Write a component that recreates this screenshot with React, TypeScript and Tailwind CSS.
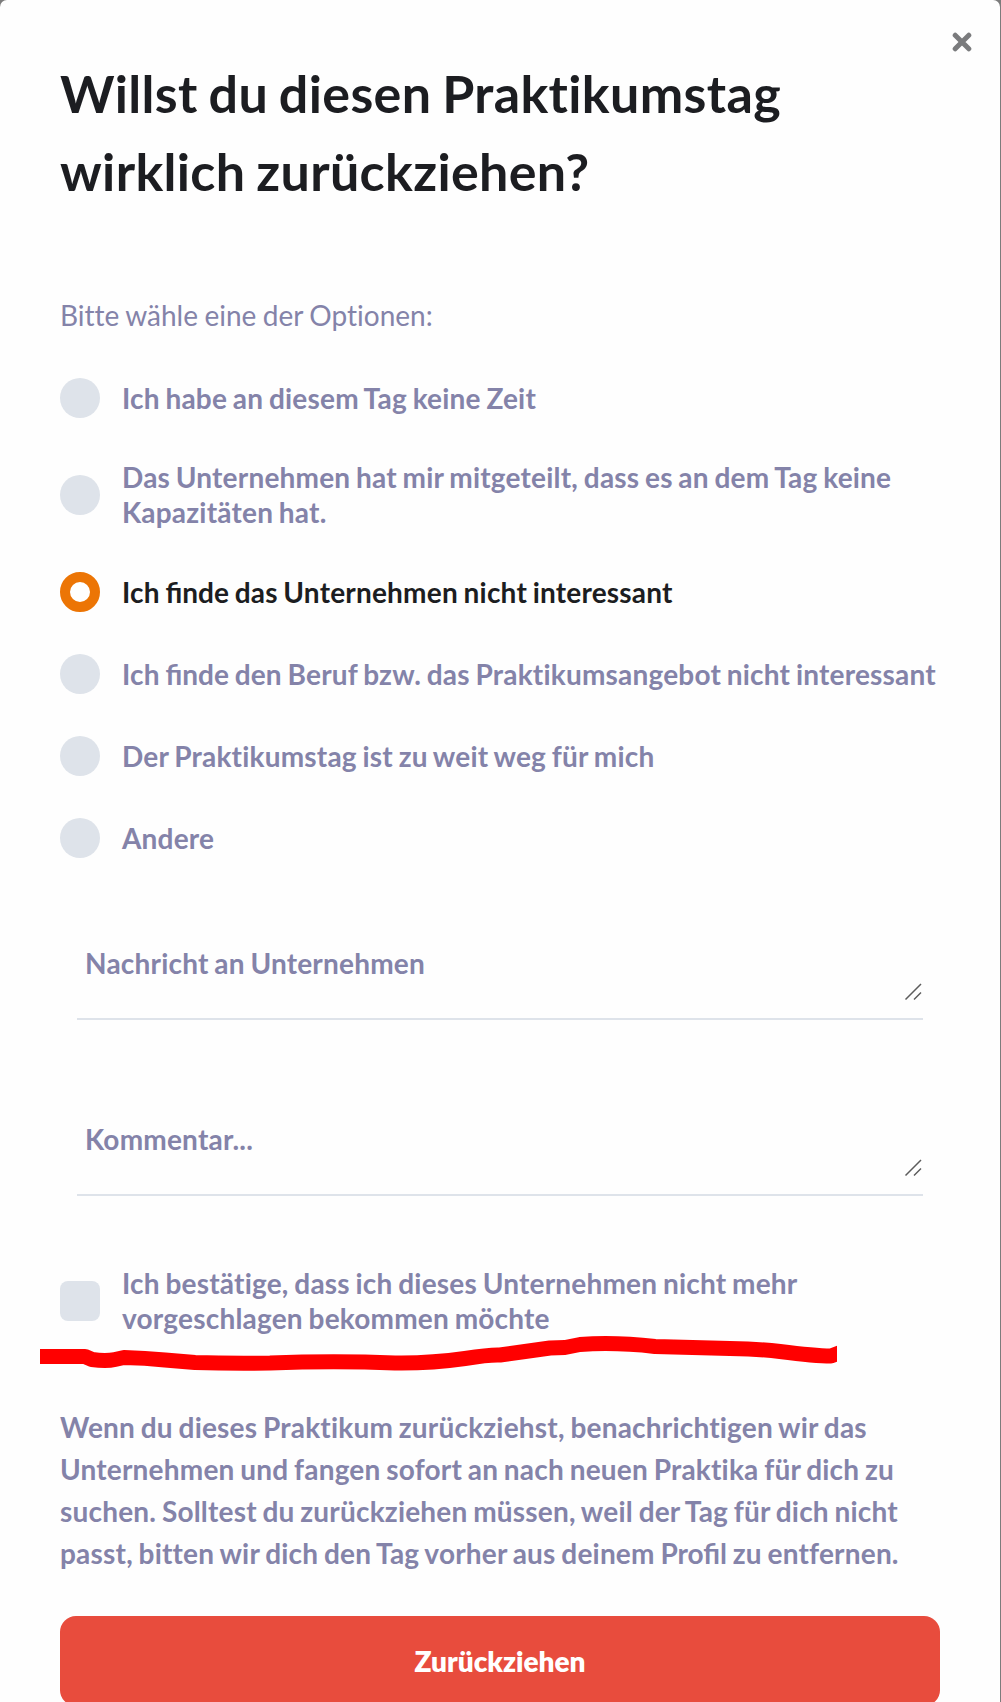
import React, { useState } from "react";

// "fi" is the only ligature used in the dialog copy
const Lig = ({ children }: { children: React.ReactNode }) => (
  <span className="tracking-normal [font-variant-ligatures:normal]">{children}</span>
);

const reasons = [
  <>Ich habe an diesem Tag keine Zeit</>,
  <>Das Unternehmen hat mir mitgeteilt, dass es an dem Tag keine Kapazitäten hat.</>,
  <>Ich <Lig>finde</Lig> das Unternehmen nicht interessant</>,
  <>Ich <Lig>finde</Lig> den Beruf bzw. das Praktikumsangebot nicht interessant</>,
  <>Der Praktikumstag ist zu weit weg für mich</>,
  <>Andere</>,
];

const MessageField = ({ placeholder }: { placeholder: string }) => (
  <div className="relative mx-[17px] h-[97px] border-b-2 border-[#dee3ea]">
    <textarea
      placeholder={placeholder}
      className="block h-[80px] w-full resize-none px-[8px] pt-[23px] text-[28px] leading-[35px] font-bold tracking-[0.2px] [word-spacing:-1.3px] text-[#1c1d21] placeholder:text-[#8483a9] focus:outline-none"
    />
    <svg className="absolute right-0 bottom-[16px] h-[20px] w-[20px]" viewBox="0 0 20 20" stroke="#5c5c5c" strokeWidth="1.5">
      <path d="M2.5 17.5L18 2M11 17.5L18 10.5" />
    </svg>
  </div>
);

const App = () => {
  const [selected, setSelected] = useState(2);
  const [confirmed, setConfirmed] = useState(false);

  return (
    <div className="h-[1702px] overflow-hidden bg-[#7c7c7c] font-[Lato,sans-serif] [font-variant-ligatures:none]">
      <div className="relative h-[1720px] w-[1000px] rounded-t-[7px] bg-[#fefefe] px-[60px] pt-[54px]">
        <button type="button" aria-label="Schließen" className="absolute top-[32px] right-[28px]">
          <svg className="h-[20px] w-[20px]" viewBox="0 0 20 20" stroke="#7a7b7d" strokeWidth="5" strokeLinecap="round">
            <path d="M3.2 3.2L16.8 16.8M16.8 3.2L3.2 16.8" />
          </svg>
        </button>

        <h1 className="text-[52px] leading-[78px] font-bold tracking-[0.35px] [word-spacing:-2.2px] text-[#1c1d21]">
          Willst du diesen Praktikumstag <br />wirklich zurückziehen?
        </h1>

        <p className="mt-[87px] text-[28px] leading-[36px] [word-spacing:-0.7px] text-[#8483a9]">
          Bitte wähle eine der Optionen:
        </p>

        <div className="mt-[45px] flex flex-col gap-[42px]">
          {reasons.map((reason, index) => (
            <label key={index} className="flex min-h-[40px] items-center gap-[22px]">
              <input
                type="radio"
                name="reason"
                checked={selected === index}
                onChange={() => setSelected(index)}
                className="h-[40px] w-[40px] shrink-0 appearance-none rounded-full bg-[#dee3ea] checked:border-[10px] checked:border-[#ec7505] checked:bg-white"
              />
              <span className={`text-[28px] leading-[35px] font-bold tracking-[0.2px] [word-spacing:-1.3px] ${selected === index ? "text-[#1c1d21]" : "text-[#8483a9]"}`}>
                {reason}
              </span>
            </label>
          ))}
        </div>

        <div className="mt-[65px] flex flex-col gap-[79px]">
          <MessageField placeholder="Nachricht an Unternehmen" />
          <MessageField placeholder="Kommentar..." />
        </div>

        <label className="mt-[70px] flex items-center gap-[22px]">
          <input
            type="checkbox"
            checked={confirmed}
            onChange={() => setConfirmed(!confirmed)}
            className="h-[40px] w-[40px] shrink-0 appearance-none rounded-[8px] bg-[#dee3ea] checked:bg-[#ec7505]"
          />
          <span className="w-[720px] text-[28px] leading-[35px] font-bold tracking-[0.2px] [word-spacing:-1.3px] text-[#8483a9]">
            Ich bestätige, dass ich dieses Unternehmen nicht mehr vorgeschlagen bekommen möchte
          </span>
        </label>

        <p className="mt-[70px] text-[28px] leading-[42px] font-bold tracking-[0.2px] whitespace-nowrap [word-spacing:-1.3px] text-[#8483a9]">
          Wenn du dieses Praktikum zurückziehst, benachrichtigen wir das <br />
          Unternehmen und fangen sofort an nach neuen Praktika für dich zu <br />
          suchen. Solltest du zurückziehen müssen, weil der Tag für dich nicht <br />
          passt, bitten wir dich den Tag vorher aus deinem <Lig>Profil</Lig> zu entfernen.
        </p>

        <button type="button" className="mt-[42px] h-[90px] w-full rounded-[16px] bg-[#e84c3d] text-[28px] font-extrabold text-white">
          Zurückziehen
        </button>

        {/* red marker line over the dialog */}
        <svg
          className="pointer-events-none absolute top-[1330px] left-[40px] h-[50px] w-[797px]"
          viewBox="40 1330 797 50"
          fill="none"
          stroke="#ff0000"
          strokeWidth="15"
          strokeLinejoin="round"
        >
          <path d="M40 1356.5H85L92 1359.5Q106 1361.5 115 1359.5L124 1357.5Q145 1358 165 1360L195 1362.5Q230 1363.5 270 1363Q335 1360.5 395 1363Q430 1363.5 465 1358.5Q490 1354.5 500 1355L525 1351.5L550 1348L565 1347.5L580 1344.5Q615 1342 655 1346.5L730 1348.5Q760 1349 780 1351.5Q815 1356 831 1356L842 1352" />
        </svg>
      </div>
    </div>
  );
};

export default App;
